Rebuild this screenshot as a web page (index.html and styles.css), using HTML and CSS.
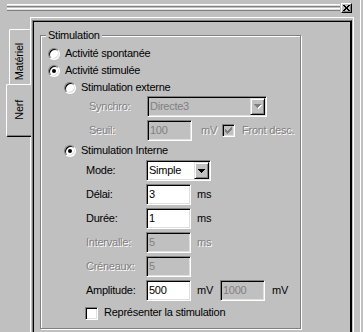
FILE: index.html
```html
<!DOCTYPE html>
<html lang="fr">
<head>
<meta charset="utf-8">
<title>Stimulation</title>
<link rel="stylesheet" href="styles.css">
</head>
<body>
<div class="screen">
  <div class="dock">
    <div class="titlebar">
      <div class="grip"><div class="grip-line"></div><div class="grip-line"></div></div>
      <div class="close-btn">
        <svg width="7" height="6" viewBox="0 0 7 6" shape-rendering="crispEdges"><path d="M0 0h2v1h1v1h1v-1h1v-1h2v1h-1v1h-1v2h1v1h1v1h-2v-1h-1v-1h-1v1h-1v1h-2v-1h1v-1h1v-2h-1v-1h-1z" fill="#000"/></svg>
      </div>
    </div>
    <div class="main">
      <div class="tabs">
        <div class="tab tab-inactive"><span class="tab-text">Matériel</span></div>
        <div class="tab tab-active"><span class="tab-text">Nerf</span></div>
      </div>
      <div class="page">
        <div class="panel">
          <div class="group">
            <div class="group-title">Stimulation</div>

            <div class="row radio-row level1 first">
              <span class="radio"></span><span class="txt">Activité spontanée</span>
            </div>
            <div class="row radio-row level1">
              <span class="radio checked"></span><span class="txt">Activité stimulée</span>
            </div>
            <div class="row radio-row level2">
              <span class="radio"></span><span class="txt">Stimulation externe</span>
            </div>

            <div class="row field-row ext">
              <span class="label ext-label disabled">Synchro:</span>
              <div class="combo disabled combo-wide">
                <span class="combo-text">Directe3</span>
                <span class="combo-btn">
                  <svg width="8" height="5" viewBox="0 0 8 5" shape-rendering="crispEdges"><path d="M1 1h7v1h-1v1h-1v1h-1v1h-1v-1h-1v-1h-1v-1h-1z" fill="#fff"/><path d="M0 0h7v1h-1v1h-1v1h-1v1h-1v-1h-1v-1h-1v-1h-1z" fill="#808080"/></svg>
                </span>
              </div>
            </div>
            <div class="row field-row ext tight">
              <span class="label ext-label disabled">Seuil:</span>
              <div class="edit disabled">100</div>
              <span class="unit disabled u-seuil">mV</span>
              <span class="check disabled">
                <svg width="7" height="7" viewBox="0 0 7 7" shape-rendering="crispEdges"><path d="M6 0h1v3h-1v1h-1v1h-1v1h-1v1h-1v-1h-1v-1h-1v-3h1v1h1v1h1v-1h1v-1h1v-1h1z" fill="#808080"/></svg>
              </span>
              <span class="txt disabled check-label">Front desc.</span>
            </div>

            <div class="row radio-row level2 tall">
              <span class="radio checked"></span><span class="txt">Stimulation Interne</span>
            </div>

            <div class="row field-row">
              <span class="label">Mode:</span>
              <div class="combo combo-mode">
                <span class="combo-text">Simple</span>
                <span class="combo-btn">
                  <svg width="7" height="4" viewBox="0 0 7 4" shape-rendering="crispEdges"><path d="M0 0h7v1h-1v1h-1v1h-1v1h-1v-1h-1v-1h-1v-1h-1z" fill="#000"/></svg>
                </span>
              </div>
            </div>
            <div class="row field-row">
              <span class="label">Délai:</span>
              <div class="edit">3</div>
              <span class="unit">ms</span>
            </div>
            <div class="row field-row">
              <span class="label">Durée:</span>
              <div class="edit">1</div>
              <span class="unit">ms</span>
            </div>
            <div class="row field-row">
              <span class="label disabled">Intervalle:</span>
              <div class="edit disabled">5</div>
              <span class="unit disabled">ms</span>
            </div>
            <div class="row field-row">
              <span class="label disabled">Créneaux:</span>
              <div class="edit disabled">5</div>
            </div>
            <div class="row field-row tight">
              <span class="label">Amplitude:</span>
              <div class="edit">500</div>
              <span class="unit u-amp">mV</span>
              <div class="edit disabled">1000</div>
              <span class="unit u-amp2">mV</span>
            </div>

            <div class="row check-row">
              <span class="check"></span>
              <span class="txt check-label2">Représenter la stimulation</span>
            </div>
          </div>
        </div>
      </div>
    </div>
  </div>
</div>
</body>
</html>
```

FILE: styles.css
```css
* { box-sizing: border-box; }
html, body { margin: 0; padding: 0; }
body {
  width: 363px;
  height: 332px;
  overflow: hidden;
  background: #c0c0c0;
  font-family: "Liberation Sans", Arial, sans-serif;
  font-size: 11px;
  letter-spacing: -0.25px;
  color: #000;
}
.screen { display: flex; height: 332px; }
.dock {
  width: 361px;
  border-right: 1px solid #fff;
  display: flex;
  flex-direction: column;
}

/* title / grip bar */
.titlebar { height: 17px; flex: none; display: flex; }
.grip {
  margin: 4px 0 0 7px;
  width: 333px;
  display: flex;
  flex-direction: column;
  gap: 1px;
}
.grip-line {
  height: 3px;
  border-top: 1px solid #fff;
  border-bottom: 1px solid #808080;
  background: #dfdfdf;
}
.close-btn {
  margin: 3px 0 0 1px;
  width: 11px;
  height: 10px;
  border: 1px solid;
  border-color: #fff #000 #000 #fff;
  box-shadow: inset -1px -1px 0 #808080;
  display: flex;
  align-items: center;
  justify-content: center;
}
.close-btn svg { display: block; }

/* tabs + page */
.main { flex: 1; display: flex; min-height: 0; overflow: hidden; }
.tabs {
  width: 30px;
  flex: none;
  display: flex;
  flex-direction: column;
  padding-top: 12px;
}
.tab {
  display: flex;
  flex-direction: column;
  justify-content: flex-end;
  align-items: flex-start;
  border-left: 1px solid #fff;
  border-top: 1px solid #fff;
  border-top-left-radius: 2px;
  background: #c0c0c0;
}
.tab-inactive {
  margin-left: 9px;
  width: 21px;
  height: 55px;
  padding: 0 0 4px 3px;
}
.tab-active {
  margin-left: 6px;
  width: 25px;
  height: 53px;
  padding: 0 0 16px 6px;
  border-bottom: 1px solid #000;
  border-bottom-left-radius: 2px;
  box-shadow: inset 0 -1px 0 #808080;
  position: relative;
  z-index: 1;
}
.tab-text {
  writing-mode: vertical-rl;
  transform: rotate(180deg);
  line-height: 13px;
  white-space: nowrap;
}

.page {
  width: 324px;
  height: 340px;
  flex: none;
  border-left: 1px solid #fff;
  border-top: 1px solid #fff;
  border-right: 1px solid #fff;
  padding: 2px 1px 0 1px;
  display: flex;
  flex-direction: column;
}
.panel {
  flex: 1;
  border: 1px solid;
  border-color: #808080 #000 #000 #808080;
  box-shadow: inset 1px 1px 0 #000, inset -1px 0 0 #000;
  padding: 14px 0 0 7px;
}

/* group box */
.group {
  width: 261px;
  height: 294px;
  border: 1px solid #808080;
  box-shadow: inset 1px 1px 0 #fff, 1px 1px 0 #fff;
  display: flex;
  flex-direction: column;
}
.group-title {
  margin: -7px 0 0 5px;
  padding: 0 2px;
  background: #c0c0c0;
  line-height: 13px;
  align-self: flex-start;
}

.row { display: flex; align-items: center; flex: none; }
.txt, .label, .unit { line-height: 13px; white-space: nowrap; padding-bottom: 1px; }

.radio-row { height: 17px; }
.radio-row.first { margin-top: 3px; }
.radio-row.tall { height: 19px; }
.level1 { padding-left: 7px; }
.level2 { padding-left: 23px; }
.radio-row .txt { margin-left: 5px; }

.radio {
  width: 12px;
  height: 12px;
  flex: none;
  border-radius: 50%;
  border: 1px solid;
  border-color: #808080 #fff #fff #808080;
  box-shadow: inset 1px 1px 0 #000, inset -1px -1px 0 #dfdfdf;
  background: #fff;
  display: flex;
  align-items: center;
  justify-content: center;
}
.radio.checked::after {
  content: "";
  width: 4px;
  height: 4px;
  border-radius: 50%;
  background: #000;
}

.field-row { height: 21px; margin-bottom: 3px; padding-left: 45px; }
.field-row.tight { margin-bottom: 0; }
.field-row.ext { padding-left: 48px; }
.label { width: 60px; flex: none; }
.ext-label { width: 58px; }

.disabled { color: #808080; }
.label.disabled, .unit.disabled, .txt.disabled { text-shadow: 1px 1px 0 #fff; }

.edit, .combo {
  height: 21px;
  flex: none;
  border: 1px solid;
  border-color: #808080 #fff #fff #808080;
  box-shadow: inset 1px 1px 0 #000, inset -1px -1px 0 #dfdfdf;
  background: #fff;
  display: flex;
  align-items: center;
  line-height: 13px;
}
.edit { width: 45px; padding-left: 2px; }
.edit.disabled, .combo.disabled { background: #c0c0c0; }

.combo { padding: 1px 1px 1px 2px; }
.combo-wide { width: 120px; }
.combo-mode { width: 65px; }
.combo-text { flex: 1; }
.combo-btn {
  width: 15px;
  height: 17px;
  flex: none;
  border: 1px solid;
  border-color: #dfdfdf #000 #000 #dfdfdf;
  box-shadow: inset 1px 1px 0 #fff, inset -1px -1px 0 #808080;
  background: #c0c0c0;
  display: flex;
  align-items: center;
  justify-content: center;
}
.combo-btn svg { display: block; }

.unit { margin-left: 6px; }
.u-seuil { margin-left: 9px; width: 21px; }
.u-amp { width: 23px; }
.u-amp2 { margin-left: 7px; }

.check {
  width: 13px;
  height: 13px;
  flex: none;
  border: 1px solid;
  border-color: #808080 #fff #fff #808080;
  box-shadow: inset 1px 1px 0 #000, inset -1px -1px 0 #dfdfdf;
  background: #fff;
  display: flex;
  align-items: center;
  justify-content: center;
}
.check.disabled { background: #c0c0c0; }
.check svg { display: block; }
.check-label { margin-left: 7px; }

.check-row { height: 24px; padding-left: 44px; }
.check-label2 { margin-left: 6px; }
```
